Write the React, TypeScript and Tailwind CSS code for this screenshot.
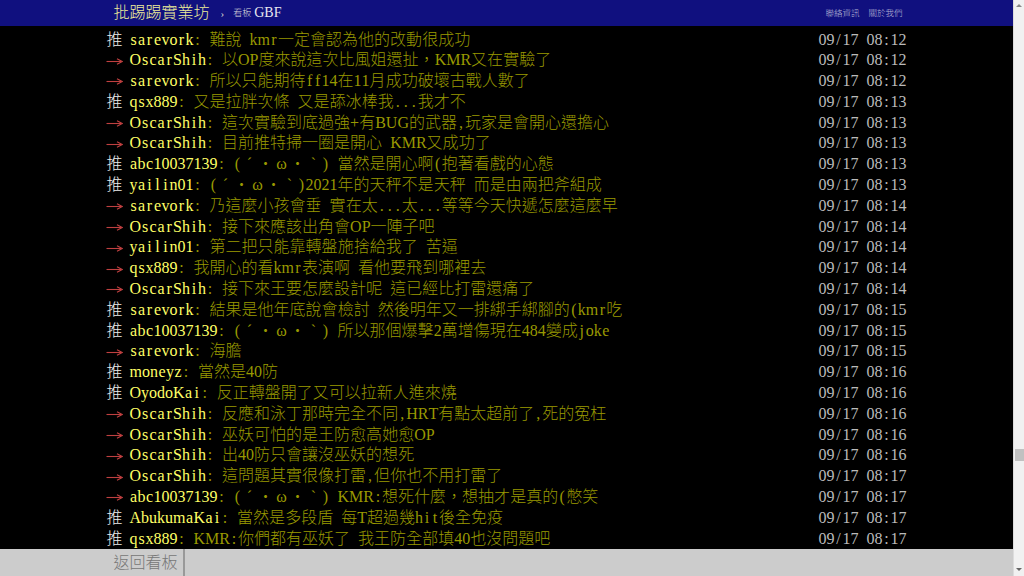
import React from "react";

type Push = { tag: "推" | "→"; user: string; content: string; time: string };

const rows: Push[] = [
  { tag: "推", user: "sarevork", content: "難說 kmr一定會認為他的改動很成功", time: "09/17 08:12" },
  { tag: "→", user: "OscarShih", content: "以OP度來說這次比風姐還扯，KMR又在實驗了", time: "09/17 08:12" },
  { tag: "→", user: "sarevork", content: "所以只能期待ff14在11月成功破壞古戰人數了", time: "09/17 08:12" },
  { tag: "推", user: "qsx889", content: "又是拉胖次條 又是舔冰棒我...我才不", time: "09/17 08:13" },
  { tag: "→", user: "OscarShih", content: "這次實驗到底過強+有BUG的武器,玩家是會開心還擔心", time: "09/17 08:13" },
  { tag: "→", user: "OscarShih", content: "目前推特掃一圈是開心 KMR又成功了", time: "09/17 08:13" },
  { tag: "推", user: "abc10037139", content: "(ˊ・ω・ˋ) 當然是開心啊(抱著看戲的心態", time: "09/17 08:13" },
  { tag: "推", user: "yailin01", content: "(ˊ・ω・ˋ)2021年的天秤不是天秤 而是由兩把斧組成", time: "09/17 08:13" },
  { tag: "→", user: "sarevork", content: "乃這麼小孩會垂 實在太...太...等等今天快遞怎麼這麼早", time: "09/17 08:14" },
  { tag: "→", user: "OscarShih", content: "接下來應該出角會OP一陣子吧", time: "09/17 08:14" },
  { tag: "→", user: "yailin01", content: "第二把只能靠轉盤施捨給我了 苦逼", time: "09/17 08:14" },
  { tag: "→", user: "qsx889", content: "我開心的看kmr表演啊 看他要飛到哪裡去", time: "09/17 08:14" },
  { tag: "→", user: "OscarShih", content: "接下來王要怎麼設計呢 這已經比打雷還痛了", time: "09/17 08:14" },
  { tag: "推", user: "sarevork", content: "結果是他年底說會檢討 然後明年又一排綁手綁腳的(kmr吃", time: "09/17 08:15" },
  { tag: "推", user: "abc10037139", content: "(ˊ・ω・ˋ) 所以那個爆擊2萬增傷現在484變成joke", time: "09/17 08:15" },
  { tag: "→", user: "sarevork", content: "海膽", time: "09/17 08:15" },
  { tag: "推", user: "moneyz", content: "當然是40防", time: "09/17 08:16" },
  { tag: "推", user: "OyodoKai", content: "反正轉盤開了又可以拉新人進來燒", time: "09/17 08:16" },
  { tag: "→", user: "OscarShih", content: "反應和泳丁那時完全不同,HRT有點太超前了,死的冤枉", time: "09/17 08:16" },
  { tag: "→", user: "OscarShih", content: "巫妖可怕的是王防愈高她愈OP", time: "09/17 08:16" },
  { tag: "→", user: "OscarShih", content: "出40防只會讓沒巫妖的想死", time: "09/17 08:16" },
  { tag: "→", user: "OscarShih", content: "這問題其實很像打雷,但你也不用打雷了", time: "09/17 08:17" },
  { tag: "→", user: "abc10037139", content: "(ˊ・ω・ˋ) KMR:想死什麼，想抽才是真的(憋笑", time: "09/17 08:17" },
  { tag: "推", user: "AbukumaKai", content: "當然是多段盾 每T超過幾hit後全免疫", time: "09/17 08:17" },
  { tag: "推", user: "qsx889", content: "KMR:你們都有巫妖了 我王防全部填40也沒問題吧", time: "09/17 08:17" },
];

function Cells({ text }: { text: string }) {
  return (
    <>
      {Array.from(text).map((c, i) =>
        c.charCodeAt(0) < 128 ? (
          <span key={i} className="inline-block min-w-[8px] text-center">
            {c === " " ? "\u00a0" : c}
          </span>
        ) : (
          <span key={i} className="inline-block min-w-[16px] text-center">
            {c}
          </span>
        )
      )}
    </>
  );
}

function Arrow() {
  return (
    <svg width="17" height="9" viewBox="0 0 17 9" className="ml-[-1px] mt-[1px]" aria-label="→">
      <line x1="0.5" y1="4.5" x2="15" y2="4.5" stroke="#c04040" strokeWidth="1.1" />
      <path d="M11 1.8 L16.2 4.5 L11 7.2" fill="none" stroke="#c04040" strokeWidth="1.1" />
    </svg>
  );
}

function Row({ p }: { p: Push }) {
  return (
    <div className="flex h-[20.8px] leading-[20.8px] whitespace-nowrap">
      {p.tag === "推" ? (
        <span className="w-[23px] shrink-0 text-[#eeeeee]">推</span>
      ) : (
        <span className="flex w-[23px] shrink-0 items-center">
          <Arrow />
        </span>
      )}
      <span className="text-[#ff6]">
        <Cells text={p.user} />
      </span>
      <span className="flex-1 overflow-hidden text-[#990]">
        <Cells text={": " + p.content} />
      </span>
      <span className="w-[88px] shrink-0 text-[#bbb]">
        <Cells text={p.time} />
      </span>
    </div>
  );
}

export default function App() {
  return (
    <div className="flex h-[576px] w-[1024px] overflow-hidden bg-black font-['Liberation_Serif','Noto_Sans_CJK_TC',serif] font-light">
      <div className="flex w-[1013px] flex-col">
        {/* top bar */}
        <div className="h-[26px] shrink-0 bg-[#10107f]">
          <div className="mx-auto flex h-full w-[800px] items-center justify-between pl-[7px] pr-[4px]">
            <div className="flex items-center">
              <span className="text-[16px] leading-none text-[#eeee99]">批踢踢實業坊</span>
              <span className="ml-[11px] text-[11px] leading-none text-[#ccc]">›</span>
              <span className="ml-[9px] text-[9px] leading-none text-[#ddd]">看板</span>
              <span className="ml-[3px] text-[14px] leading-none text-[#e8e8f0]">GBF</span>
            </div>
            <div className="flex items-center gap-[9px] text-[8.5px] leading-none text-[#b8b8d8]">
              <span>聯絡資訊</span>
              <span>關於我們</span>
            </div>
          </div>
        </div>
        {/* content */}
        <div className="h-[523px] shrink-0 overflow-hidden pt-[3.5px]">
          <div className="mx-auto w-[800px] text-[16px]">
            {rows.map((p, i) => (
              <Row key={i} p={p} />
            ))}
          </div>
        </div>
        {/* bottom bar */}
        <div className="h-[27px] shrink-0 bg-[#cccccc]">
          <div className="mx-auto flex h-full w-[800px]">
            <div className="flex h-full w-[78px] items-center border-r-2 border-r-[#999] pl-[7px] text-[16px] text-[#777]">
              返回看板
            </div>
          </div>
        </div>
      </div>
      {/* scrollbar */}
      <div className="relative h-full w-[11px] border-l border-l-[#dcdcdc] bg-[#f1f1f1]">
        <div className="absolute left-[2px] top-[4px] h-0 w-0 border-x-[3px] border-b-[3px] border-x-transparent border-b-[#888]" />
        <div className="absolute left-[1px] top-[449px] h-[12px] w-[9px] bg-[#c1c1c1]" />
        <div className="absolute left-[2px] top-[568px] h-0 w-0 border-x-[3px] border-t-[3px] border-x-transparent border-t-[#666]" />
      </div>
    </div>
  );
}
